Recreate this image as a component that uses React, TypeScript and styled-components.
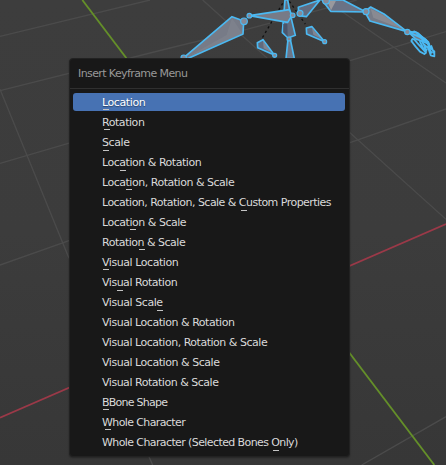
import React from "react";
import styled, { createGlobalStyle } from "styled-components";

const GlobalStyle = createGlobalStyle`
  html, body { margin: 0; padding: 0; background: #3b3b3b; overflow: hidden; }
`;

const Viewport = styled.main`
  position: relative;
  box-sizing: border-box;
  width: 446px;
  height: 465px;
  padding: 58px 0 0 69px;
  overflow: hidden;
  background: linear-gradient(#3d3d3d, #3c3c3c 50%, #373737);
  font-family: "DejaVu Sans", sans-serif;
`;

const Scene = styled.svg`
  position: absolute;
  inset: 0;
  width: 446px;
  height: 465px;
`;

const Menu = styled.section`
  position: relative;
  box-sizing: border-box;
  width: 281px;
  height: 399px;
  border: 1px solid #222;
  border-radius: 4px;
  background: #181818;
  box-shadow: 0 1px 2px rgba(0, 0, 0, 0.35);
`;

const Title = styled.header`
  box-sizing: border-box;
  height: 30px;
  padding: 0 0 0 8px;
  border-bottom: 1px solid #303030;
  color: #989898;
  font-size: 11px;
  line-height: 30px;
  letter-spacing: -0.6px;
  white-space: pre;
`;

const Items = styled.div`
  display: flex;
  flex-direction: column;
  gap: 2px;
  padding: 4px 4px 0 3px;
`;

const Item = styled.div<{ $active: boolean; $tracking: number }>`
  position: relative;
  height: 18px;
  padding-left: 29px;
  border-radius: 3px;
  background: ${(p) => (p.$active ? "#4772b3" : "transparent")};
  color: ${(p) => (p.$active ? "#fff" : "#dadada")};
  font-size: 11px;
  line-height: 20px;
  letter-spacing: ${(p) => p.$tracking}px;
  white-space: pre;
  text-shadow: ${(p) => (p.$active ? "0 1px 1px rgba(0, 0, 0, 0.4)" : "none")};
`;

const Mnemonic = styled.i<{ $x: number; $y: number }>`
  position: absolute;
  left: ${(p) => p.$x}px;
  top: ${(p) => p.$y}px;
  width: 6px;
  height: 1px;
  background: #c4c4c4;
`;

type Entry = { label: string; tracking: number; mark?: [number, number] };

const entries: Entry[] = [
  { label: "Location", tracking: -0.4, mark: [30, 16] },
  { label: "Rotation", tracking: -0.45, mark: [31, 16] },
  { label: "Scale", tracking: -0.42, mark: [30, 17] },
  { label: "Location & Rotation", tracking: -0.47, mark: [47, 17] },
  { label: "Location, Rotation & Scale", tracking: -0.48, mark: [53, 16] },
  { label: "Location, Rotation, Scale & Custom Properties", tracking: -0.53, mark: [168, 17] },
  { label: "Location & Scale", tracking: -0.47, mark: [57, 16] },
  { label: "Rotation & Scale", tracking: -0.5, mark: [66, 16] },
  { label: "Visual Location", tracking: -0.44, mark: [30, 16] },
  { label: "Visual Rotation", tracking: -0.48, mark: [44, 17] },
  { label: "Visual Scale", tracking: -0.44, mark: [84, 17] },
  { label: "Visual Location & Rotation", tracking: -0.46 },
  { label: "Visual Location, Rotation & Scale", tracking: -0.48 },
  { label: "Visual Location & Scale", tracking: -0.46 },
  { label: "Visual Rotation & Scale", tracking: -0.48 },
  { label: "BBone Shape", tracking: -0.76, mark: [30, 16] },
  { label: "Whole Character", tracking: -0.61, mark: [32, 16] },
  { label: "Whole Character (Selected Bones Only)", tracking: -0.6, mark: [200, 17] },
];

function Armature() {
  return (
    <Scene viewBox="0 0 1338 1395" aria-hidden="true">
      <g stroke="#4b4b4b" strokeWidth="4" fill="none">
        <path d="M0 109L450 0M0 272L510 144L740 88L1070 0M0 490L1050 182L1338 95M0 795L207 722L1050 428L1338 327" />
        <path d="M1085 1395L1338 1250M0 268L207 775M447 1370L458 1395M608 0L1338 658M975 0L1338 249" />
      </g>
      <path d="M0 1253L1338 672" stroke="#9b3948" strokeWidth="5" />
      <path d="M247 0L1303 1395" stroke="#648f29" strokeWidth="5.5" />
      <g stroke="#101010" strokeWidth="4" strokeDasharray="7 9" fill="none">
        <path d="M848 10L786 115M868 4L916 72" />
      </g>
      <g stroke="#4bb9f2" strokeWidth="5" strokeLinejoin="round" fill="#777b87">
        <path d="M548 176L696 50L731 63L729 102L562 176Z" />
        <path d="M855 0L847 98L864 114L886 106L874 56L863 0Z" fill="#626b7d" />
        <path d="M748 47L868 29L876 46L863 67Z" />
        <path d="M864 118L858 176H883L871 118Z" fill="#6c7587" />
        <path d="M772 128L789 119L823 165L773 143Z" fill="#606b7e" />
        <path d="M919 84L936 80L974 125L920 102Z" fill="#606b7e" />
        <path d="M895 22L960 0L919 50L897 47Z" fill="#626c80" />
        <path d="M966 0L992 34L1098 36L1029 0Z" fill="#6a7285" />
        <path d="M1094 35L1112 21L1152 42L1221 95L1110 63Z" />
        <path d="M1223 94L1248 97L1278 119L1287 132L1246 116Z" />
      </g>
      <path d="M696 54L680 105L568 168L727 101Z" fill="#888b94" opacity=".4" />
      <path d="M982 2L1008 2L993 31Z" fill="#99999d" />
      <path d="M1112 26L1150 46L1209 88L1120 53Z" fill="#929297" opacity=".7" />
      <path d="M850 72L850 96L863 110L862 72Z" fill="#4b556b" />
      <path d="M789 123L791 145L814 157ZM936 85L940 104L964 116Z" fill="#8f929b" opacity=".7" />
      <g fill="none" stroke="#4bb9f2" strokeWidth="5.5" strokeLinecap="round" strokeLinejoin="round">
        <path d="M1227 94L1242 104L1265 114M1242 94L1255 100L1271 115L1285 126L1291 144L1303 154V169L1292 166L1285 145L1269 130L1266 121L1280 124M1237 117L1234 123L1247 140L1260 155L1273 162L1278 158L1261 139L1251 128L1243 118ZM1268 127L1274 139L1279 153M1260 125L1269 144L1280 149M1285 127L1285 143L1295 158M1294 138L1301 158M1251 105L1274 122L1290 140" />
      </g>
      <g fill="#858997" stroke="#4bb9f2" strokeWidth="3.5">
        <circle cx="551" cy="173" r="8" />
        <circle cx="732" cy="64" r="10" />
        <circle cx="748" cy="47" r="7" />
        <circle cx="878" cy="46" r="7" />
        <circle cx="900" cy="40" r="9" />
        <circle cx="867" cy="117" r="6" />
        <circle cx="824" cy="166" r="6" />
        <circle cx="974" cy="125" r="6" />
        <circle cx="978" cy="2" r="10" />
        <circle cx="1098" cy="35" r="9" />
        <circle cx="1222" cy="96" r="8" />
      </g>
    </Scene>
  );
}

export default function App() {
  return (
    <>
      <GlobalStyle />
      <Viewport>
        <Armature />
        <Menu>
          <Title>Insert Keyframe Menu</Title>
          <Items>
            {entries.map((entry, i) => (
              <Item key={entry.label} $active={i === 0} $tracking={entry.tracking}>
                {entry.label}
                {entry.mark && <Mnemonic $x={entry.mark[0]} $y={entry.mark[1]} />}
              </Item>
            ))}
          </Items>
        </Menu>
      </Viewport>
    </>
  );
}
